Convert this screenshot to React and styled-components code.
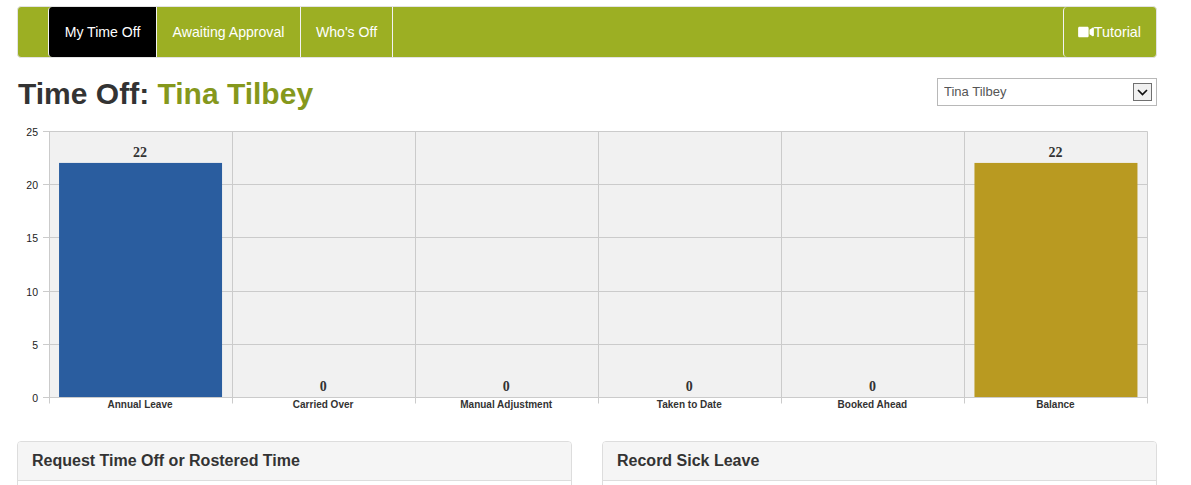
import React from "react";
import styled, { createGlobalStyle } from "styled-components";
import { FaVideo } from "react-icons/fa";

const GlobalStyle = createGlobalStyle`
    html, body {
        margin: 0;
        height: 485px;
        overflow: hidden;
        background: white;
        font-family: 'Liberation Sans', Arial, sans-serif;
        color: #333;
    }
`;

const Page = styled.div`
    width: 1140px;
    margin-left: 17px;
    padding-top: 6px;
`;

const Navbar = styled.nav`
    display: flex;
    height: 50px;
    padding-left: 30px;
    background: #9caf23;
    border: 1px solid #e3e3e3;
    border-radius: 4px;
`;

const Tab = styled.a`
    display: flex;
    align-items: center;
    justify-content: center;
    width: ${(p) => p.$width}px;
    font-size: 14.1px;
    color: white;
    border-right: 1px solid #f2f2f2;
    background: ${(p) => (p.$active ? "black" : "transparent")};
    border-left: ${(p) => (p.$active ? "1px solid #f2f2f2" : "none")};
    border-radius: ${(p) => (p.$active ? "4px 0 0 4px" : "0")};
`;

const TutorialTab = styled.a`
    display: flex;
    align-items: center;
    margin-left: auto;
    padding: 0 15px 0 14px;
    font-size: 14.3px;
    color: white;
    border-left: 1px solid #f2f2f2;
    border-radius: 4px;
`;

const TitleRow = styled.div`
    display: flex;
    justify-content: space-between;
    align-items: flex-start;
    height: 66px;
    padding-top: 20px;
    box-sizing: border-box;
`;

const Title = styled.h1`
    margin: -2px 0 0 1px;
    font-size: 30px;
    line-height: 36px;
    font-weight: bold;
    color: #333;
`;

const Name = styled.span`
    color: #85981c;
`;

const SelectWrap = styled.div`
    position: relative;
    width: 220px;
    height: 28px;
`;

const Select = styled.select`
    appearance: none;
    display: block;
    width: 100%;
    height: 100%;
    padding: 0 0 1px 6px;
    font-family: 'Liberation Sans', Arial, sans-serif;
    font-size: 13px;
    color: #555;
    background: white;
    border: 1px solid #b8b8b8;
    border-radius: 0;
`;

const SelectArrow = styled.span`
    position: absolute;
    top: 5px;
    right: 5px;
    width: 17px;
    height: 16px;
    display: flex;
    align-items: center;
    justify-content: center;
    background: #f0f0f0;
    border: 1px solid #707070;
    pointer-events: none;
`;

const ChartBox = styled.div`
    height: 311px;
`;

const Panels = styled.div`
    display: grid;
    grid-template-columns: 1fr 1fr;
    gap: 30px;
    margin-top: 6px;
`;

const Panel = styled.section`
    height: 120px;
    border: 1px solid #ddd;
    border-radius: 4px;
`;

const PanelHeader = styled.h3`
    margin: 0;
    height: 38px;
    padding: 0 14px;
    display: flex;
    align-items: center;
    font-size: 16px;
    font-weight: bold;
    color: #333;
    background: #f5f5f5;
    border-bottom: 1px solid #ddd;
    border-radius: 3px 3px 0 0;
`;

const TutorialIcon = styled(FaVideo)`
    width: 16px;
    height: 14px;
`;

const bars = [
    { label: "Annual Leave", value: 22, color: "#2a5d9f" },
    { label: "Carried Over", value: 0 },
    { label: "Manual Adjustment", value: 0 },
    { label: "Taken to Date", value: 0 },
    { label: "Booked Ahead", value: 0 },
    { label: "Balance", value: 22, color: "#b99a21" },
];

const X0 = 32;
const X1 = 1130.5;
const Y0 = 7.5;
const Y1 = 273.5;
const STEP = (X1 - X0) / 6;
const yOf = (v) => Y1 - ((Y1 - Y0) * v) / 25;

const Chart = () => (
    <svg width="1140" height="311" viewBox="0 0 1140 311" style={{ display: "block" }}>
        <rect x={X0} y={Y0} width={X1 - X0} height={Y1 - Y0} fill="#f1f1f1" />
        {[0, 5, 10, 15, 20, 25].map((v) => (
            <g key={v}>
                <line x1={X0 - 6} x2={X1} y1={Math.floor(yOf(v)) + 0.5} y2={Math.floor(yOf(v)) + 0.5} stroke="#cbcbcb" />
                <text x={X0 - 11} y={yOf(v) + 4.5} textAnchor="end" fontSize="10.5" fill="#222" fontFamily="Liberation Sans">
                    {v}
                </text>
            </g>
        ))}
        {[0, 1, 2, 3, 4, 5, 6].map((i) => {
            const x = Math.round(X0 + STEP * i - 0.5) + 0.5;
            return <line key={i} x1={x} x2={x} y1={Y0} y2={Y1 + 6} stroke="#cbcbcb" />;
        })}
        {bars.map((b, i) => {
            const cx = X0 + STEP * (i + 0.5);
            return (
                <g key={b.label}>
                    {b.value > 0 && (
                        <rect x={cx - 81.5} y={yOf(b.value) - 0.5} width={163} height={Y1 - yOf(b.value)} fill={b.color} />
                    )}
                    <text x={cx - 0.5} y={yOf(b.value) - 6.5} textAnchor="middle" fontSize="14" fontWeight="bold" fill="#333" fontFamily="Liberation Serif">
                        {b.value}
                    </text>
                    <text x={cx - 0.5} y={Y1 + 10} textAnchor="middle" fontSize="10" fontWeight="bold" fill="#333" fontFamily="Liberation Sans">
                        {b.label}
                    </text>
                </g>
            );
        })}
    </svg>
);

export default function App() {
    return (
        <Page>
            <GlobalStyle />
            <Navbar>
                <Tab $active $width={107}>My Time Off</Tab>
                <Tab $width={143}>Awaiting Approval</Tab>
                <Tab $width={91}>Who's Off</Tab>
                <TutorialTab>
                    <TutorialIcon />
                    Tutorial
                </TutorialTab>
            </Navbar>
            <TitleRow>
                <Title>
                    Time Off: <Name>Tina Tilbey</Name>
                </Title>
                <SelectWrap>
                    <Select defaultValue="Tina Tilbey">
                        <option>Tina Tilbey</option>
                    </Select>
                    <SelectArrow>
                        <svg width="11" height="7" viewBox="0 0 11 7">
                            <path d="M1 1l4.5 4.5L10 1" fill="none" stroke="#111" strokeWidth="1.7" />
                        </svg>
                    </SelectArrow>
                </SelectWrap>
            </TitleRow>
            <ChartBox>
                <Chart />
            </ChartBox>
            <Panels>
                <Panel>
                    <PanelHeader>Request Time Off or Rostered Time</PanelHeader>
                </Panel>
                <Panel>
                    <PanelHeader>Record Sick Leave</PanelHeader>
                </Panel>
            </Panels>
        </Page>
    );
}
